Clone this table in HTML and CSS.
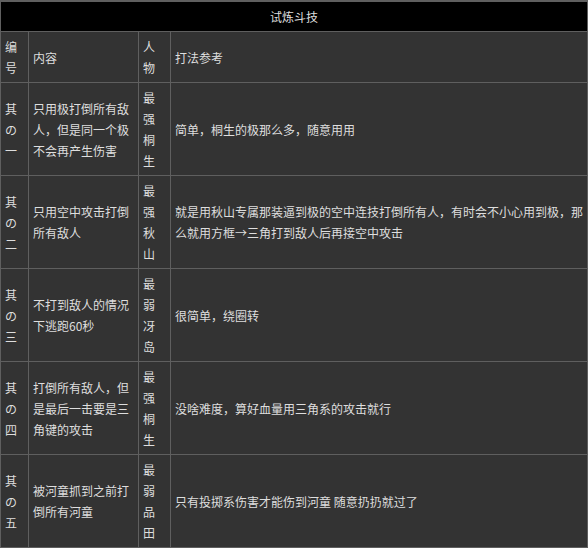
FILE: index.html
```html
<!DOCTYPE html>
<html lang="zh">
<head>
<meta charset="utf-8">
<title>试炼斗技</title>
<link rel="stylesheet" href="styles.css">
</head>
<body>
<div class="frame">
<table class="trial">
  <colgroup>
    <col class="c-no">
    <col class="c-desc">
    <col class="c-char">
    <col class="c-tip">
  </colgroup>
  <tr><td class="title" colspan="4">试炼斗技</td></tr>
  <tr><td>编号</td><td>内容</td><td>人物</td><td>打法参考</td></tr>
  <tr><td>其の一</td><td>只用极打倒所有敌人，但是同一个极不会再产生伤害</td><td>最强桐生</td><td>简单，桐生的极那么多，随意用用</td></tr>
  <tr><td>其の二</td><td>只用空中攻击打倒所有敌人</td><td>最强秋山</td><td>就是用秋山专属那装逼到极的空中连技打倒所有人，有时会不小心用到极，那么就用方框→三角打到敌人后再接空中攻击</td></tr>
  <tr><td>其の三</td><td>不打到敌人的情况下逃跑60秒</td><td>最弱冴岛</td><td>很简单，绕圈转</td></tr>
  <tr><td>其の四</td><td>打倒所有敌人，但是最后一击要是三角键的攻击</td><td>最强桐生</td><td>没啥难度，算好血量用三角系的攻击就行</td></tr>
  <tr><td>其の五</td><td>被河童抓到之前打倒所有河童</td><td>最弱品田</td><td>只有投掷系伤害才能伤到河童 随意扔扔就过了</td></tr>
</table>
</div>
</body>
</html>
```

FILE: styles.css
```css
html, body {
  margin: 0;
  padding: 0;
  background: #333333;
}
.frame {
  width: 588px;
  background: #5f5f5f;
  padding-top: 1px;
}
.trial {
  width: 588px;
  table-layout: fixed;
  border-collapse: separate;
  border-spacing: 1px;
  background: #5f5f5f;
  font-family: "Noto Sans CJK SC", "Noto Sans", sans-serif;
  font-size: 12px;
  line-height: 21px;
  color: #dedede;
}
.c-no { width: 27px; }
.c-desc { width: 109px; }
.c-char { width: 31px; }
.c-tip { width: 416px; }
.trial td {
  background: #333333;
  padding: 4px;
  vertical-align: middle;
  text-align: left;
  word-break: break-all;
}
.trial td.title {
  background: #000000;
  text-align: center;
}
```
